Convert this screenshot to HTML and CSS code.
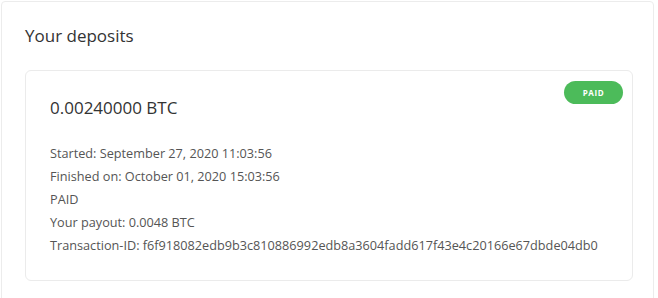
FILE: index.html
```html
<!DOCTYPE html>
<html>
<head>
<meta charset="utf-8">
<link rel="stylesheet" href="styles.css">
</head>
<body>
<section class="panel">
  <h2 class="panel-title">Your deposits</h2>
  <div class="deposit">
    <div class="deposit-head">
      <div class="amount">0.00240000 BTC</div>
      <span class="badge">PAID</span>
    </div>
    <ul class="details">
      <li>Started: September 27, 2020 11:03:56</li>
      <li>Finished on: October 01, 2020 15:03:56</li>
      <li>PAID</li>
      <li>Your payout: 0.0048 BTC</li>
      <li>Transaction-ID: f6f918082edb9b3c810886992edb8a3604fadd617f43e4c20166e67dbde04db0</li>
    </ul>
  </div>
</section>
</body>
</html>
```

FILE: styles.css
```css
* { box-sizing: border-box; }
html, body { margin: 0; padding: 0; background: #ffffff; }
body {
  font-family: "Open Sans", "DejaVu Sans", sans-serif;
  color: #444;
}
.panel {
  margin: 1px 4px 0 1px;
  border: 1px solid #ececec;
  border-radius: 4px;
  padding: 22px 20px 30px 23px;
  height: 320px;
}
.panel-title {
  margin: 0 0 22px 0;
  font-size: 17px;
  font-weight: 400;
  color: #333;
  line-height: 24px;
}
.deposit {
  border: 1px solid #ebebeb;
  border-radius: 6px;
  padding: 9px 9px 23px 24px;
}
.deposit-head {
  display: flex;
  justify-content: space-between;
  align-items: flex-start;
}
.amount {
  margin-top: 16px;
  font-size: 17px;
  line-height: 24px;
  color: #333;
}
.badge {
  background: #4cbb5a;
  color: #fff;
  font-size: 8px;
  font-weight: 700;
  letter-spacing: 0.6px;
  border-radius: 12px;
  width: 59px;
  height: 23px;
  display: flex;
  align-items: center;
  justify-content: center;
  margin-top: 1px;
}
.details {
  list-style: none;
  margin: 22px 0 0 0;
  padding: 0;
  font-size: 12.7px;
  line-height: 23px;
  color: #555;
}
```
